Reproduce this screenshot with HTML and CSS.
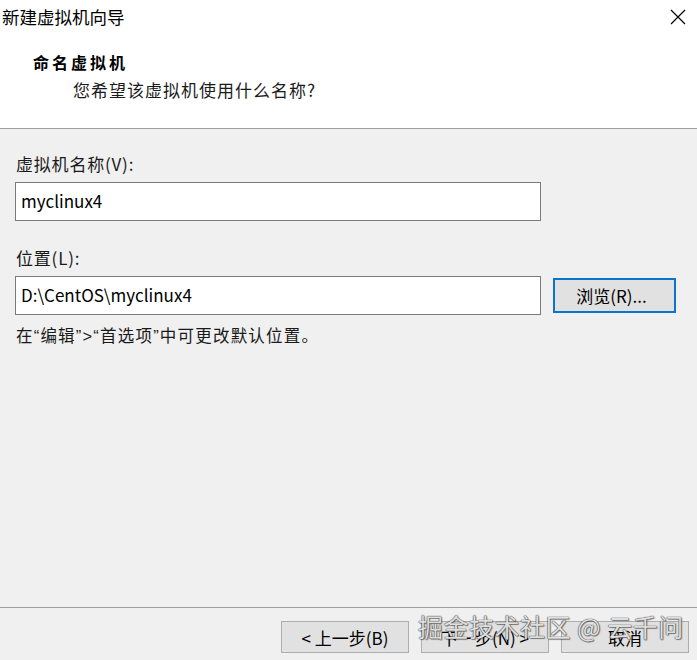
FILE: index.html
```html
<!DOCTYPE html>
<html lang="zh-CN">
<head>
<meta charset="utf-8">
<title>新建虚拟机向导</title>
<link rel="stylesheet" href="styles.css">
</head>
<body>
<div class="dialog">
  <header class="header">
    <div class="titlebar">
      <span class="title">新建虚拟机向导</span>
      <svg class="close" width="16" height="16" viewBox="0 0 16 16"><path d="M1 1 L15 15 M15 1 L1 15" stroke="#000" stroke-width="1.2" fill="none"/></svg>
    </div>
    <div class="head-title">命名虚拟机</div>
    <div class="head-sub">您希望该虚拟机使用什么名称?</div>
  </header>
  <main class="content">
    <div class="label first">虚拟机名称(V):</div>
    <div class="row">
      <div class="input">myclinux4</div>
    </div>
    <div class="label second">位置(L):</div>
    <div class="row">
      <div class="input">D:\CentOS\myclinux4</div>
      <div class="btn browse">浏览(R)...</div>
    </div>
    <div class="hint">在<span class="q">“</span>编辑<span class="q">”&gt;“</span>首选项<span class="q">”</span>中可更改默认位置。</div>
  </main>
  <footer class="footer">
    <div class="btn fbtn">&lt; 上一步(B)</div>
    <div class="btn fbtn">下一步(N) &gt;</div>
    <div class="btn fbtn">取消</div>
    <div class="watermark">掘金技术社区 @ 云千问</div>
  </footer>
</div>
</body>
</html>
```
FILE: styles.css
```css
* { box-sizing: border-box; }
html, body { margin: 0; padding: 0; }
body {
  width: 697px;
  height: 660px;
  background: #f0f0f0;
  font-family: "Noto Sans CJK SC", "Noto Sans", sans-serif;
  color: #000;
  overflow: hidden;
}
.dialog {
  width: 697px;
  height: 660px;
  display: flex;
  flex-direction: column;
}
.header {
  background: #fff;
  height: 129px;
  border-bottom: 1px solid #a0a0a0;
}
.titlebar {
  height: 33px;
  display: flex;
  align-items: center;
  justify-content: space-between;
  padding-left: 2px;
  padding-right: 11px;
}
.title {
  font-size: 17.5px;
  line-height: 33px;
  color: #000;
}
.head-title {
  margin-top: 19px;
  margin-left: 33px;
  font-size: 16px;
  line-height: 20px;
  font-weight: 700;
  letter-spacing: 3px;
  color: #000;
}
.head-sub {
  margin-top: 8px;
  margin-left: 73px;
  font-size: 17px;
  line-height: 20px;
  letter-spacing: 1px;
  color: #1a1a1a;
}
.content {
  flex: 1;
  padding: 0 16px 0 15px;
}
.label {
  font-size: 17px;
  line-height: 20px;
  padding-left: 1px;
  letter-spacing: 0.8px;
  color: #1a1a1a;
}
.label.first { margin-top: 25px; margin-bottom: 8px; }
.label.second { margin-top: 27px; margin-bottom: 8px; }
.row {
  display: flex;
  align-items: center;
  gap: 12px;
}
.input {
  width: 526px;
  height: 39px;
  background: #fff;
  border: 1px solid #7a7a7a;
  font-size: 17px;
  line-height: 35px;
  padding-left: 5px;
  color: #000;
}
.btn {
  display: flex;
  align-items: center;
  justify-content: center;
  background: #e1e1e1;
  border: 1px solid #adadad;
  font-size: 17px;
  color: #000;
}
.browse {
  width: 123px;
  height: 35px;
  border: 2px solid #0a74cf;
  padding-right: 6px;
}
.hint {
  margin-top: 10px;
  padding-left: 1px;
  font-size: 16.5px;
  line-height: 20px;
  letter-spacing: 1.2px;
  color: #1a1a1a;
}
.q {
  font-family: "Liberation Sans", sans-serif;
}
.footer {
  position: relative;
  height: 53px;
  border-top: 1px solid #a0a0a0;
  display: flex;
  justify-content: flex-end;
  gap: 12px;
  padding: 13px 8px 0 0;
}
.fbtn {
  width: 128px;
  height: 32px;
}
.watermark {
  position: absolute;
  left: 418px;
  top: 2px;
  font-size: 25px;
  line-height: 32px;
  letter-spacing: 0.5px;
  color: rgba(255, 255, 255, 0.85);
  text-shadow: 0 0 1px #333, 0 0 1px #333, 1px 1px 1px rgba(0,0,0,0.4);
  white-space: nowrap;
}
```
